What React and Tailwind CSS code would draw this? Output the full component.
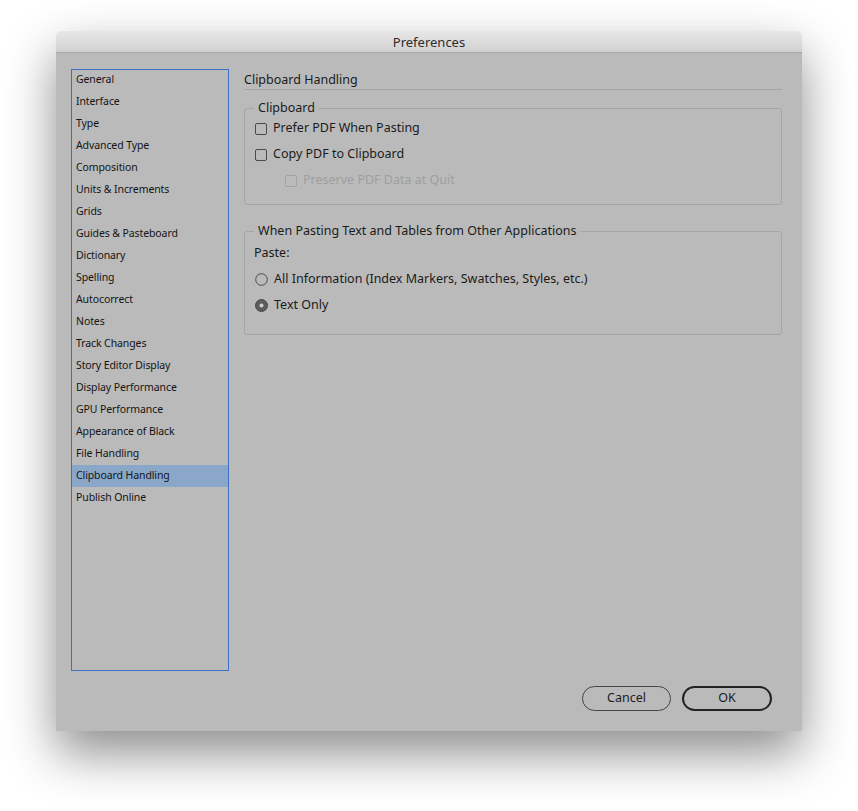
const SECTIONS = [
  'General', 'Interface', 'Type', 'Advanced Type', 'Composition',
  'Units & Increments', 'Grids', 'Guides & Pasteboard', 'Dictionary',
  'Spelling', 'Autocorrect', 'Notes', 'Track Changes', 'Story Editor Display',
  'Display Performance', 'GPU Performance', 'Appearance of Black',
  'File Handling', 'Clipboard Handling', 'Publish Online',
];

const font = { fontFamily: '"Noto Sans", "DejaVu Sans", sans-serif' };

const CheckBox = ({ label, disabled, indent }) => (
  <div className={`flex items-center h-[26px] ${indent ? 'pl-[40px]' : 'pl-[10px]'}`}>
    <span
      className={`w-[12px] h-[12px] rounded-[2px] border ${
        disabled ? 'border-[#a3a3a3]' : 'border-[#4a4a4a]'
      }`}
    />
    <span className={`ml-[6px] text-[12.5px] ${disabled ? 'text-[#9f9f9f]' : 'text-[#1b1b1b]'}`}>
      {label}
    </span>
  </div>
);

const Radio = ({ label, checked }) => (
  <div className="flex items-center h-[26px] pl-[10px]">
    <svg width="13" height="13" viewBox="0 0 13 13">
      {checked ? (
        <>
          <circle cx="6.5" cy="6.5" r="6" fill="#5c5c5c" stroke="#4a4a4a" strokeWidth="1" />
          <circle cx="6.5" cy="6.5" r="2" fill="#cfcfcf" />
        </>
      ) : (
        <circle cx="6.5" cy="6.5" r="5.8" fill="none" stroke="#4a4a4a" strokeWidth="1" />
      )}
    </svg>
    <span className="ml-[6px] text-[12.5px] text-[#1b1b1b]">{label}</span>
  </div>
);

export default function App() {
  const selected = 'Clipboard Handling';

  return (
    <div className="min-h-screen bg-white pt-[31px] pl-[56px]" style={font}>
      <div className="w-[746px] h-[700px] flex flex-col rounded-t-[5px] shadow-[0_22px_50px_rgba(0,0,0,0.45)] overflow-hidden">
        {/* title bar */}
        <div className="h-[22px] pt-[2px] flex items-center justify-center bg-gradient-to-b from-[#e8e7e8] to-[#d2d1d2] border-b border-[#a8a8a8] text-[13px] text-[#2c2c2c]">
          Preferences
        </div>

        <div className="flex-1 flex flex-col bg-[#bababa] pt-[16px] pl-[15px] pr-[20px] pb-[20px]">
          <div className="flex gap-[15px]">
            {/* sidebar */}
            <div className="w-[158px] h-[602px] border border-[#3b72c4]">
              <div className="-mt-px">
                {SECTIONS.map((s) => (
                  <div
                    key={s}
                    className={`h-[22px] flex items-center pl-[4px] text-[10.5px] tracking-[-0.1px] text-[#141414] ${
                      s === selected ? 'bg-[#8aa7ca]' : ''
                    }`}
                  >
                    {s}
                  </div>
                ))}
              </div>
            </div>

            {/* content */}
            <div className="flex-1">
              <div className="h-[21px] pt-[3px] flex items-center text-[12.5px] text-[#1b1b1b] border-b border-[#a6a6a6]">
                Clipboard Handling
              </div>

              <fieldset className="mt-[9px] border border-[#a6a6a6] rounded-[3px] pb-[10px]">
                <legend className="ml-[9px] px-[4px] text-[12.5px] text-[#1b1b1b]">Clipboard</legend>
                <div className="-mt-[2px]">
                  <CheckBox label="Prefer PDF When Pasting" />
                  <CheckBox label="Copy PDF to Clipboard" />
                  <CheckBox label="Preserve PDF Data at Quit" disabled indent />
                </div>
              </fieldset>

              <fieldset className="mt-[17px] border border-[#a6a6a6] rounded-[3px] pb-[15px]">
                <legend className="ml-[9px] px-[4px] text-[12.5px] text-[#1b1b1b]">
                  When Pasting Text and Tables from Other Applications
                </legend>
                <div className="pl-[9px] h-[26px] flex items-center text-[12.5px] text-[#1b1b1b]">Paste:</div>
                <Radio label="All Information (Index Markers, Swatches, Styles, etc.)" />
                <Radio label="Text Only" checked />
              </fieldset>
            </div>
          </div>

          {/* buttons */}
          <div className="mt-[15px] flex justify-end gap-[11px] pr-[10px]">
            <button className="w-[89px] h-[25px] rounded-full border border-[#454545] text-[12.5px] text-[#1b1b1b]">
              Cancel
            </button>
            <button className="w-[90px] h-[25px] rounded-full border-2 border-[#222] text-[12.5px] text-[#1b1b1b]">
              OK
            </button>
          </div>
        </div>
      </div>
    </div>
  );
}
